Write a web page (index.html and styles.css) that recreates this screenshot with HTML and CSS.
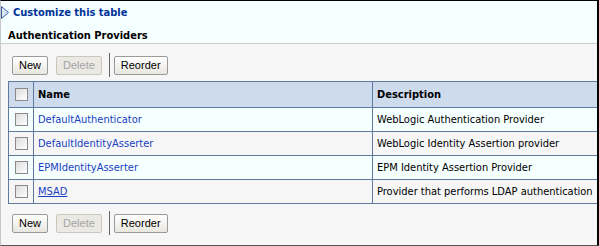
FILE: index.html
```html
<!DOCTYPE html>
<html>
  <head>
    <meta http-equiv="Content-Type" content="text/html; charset=UTF-8" />
    <title>Authentication Providers</title>
    <link rel="stylesheet" href="styles.css">
  </head>
  <body>
    <div class="frame">
      <div class="top">
        <a class="customize" href="#">
          <svg class="arrow" width="8" height="13" viewBox="0 0 8 13">
            <path d="M0.5 0.5 L7.5 6.5 L0.5 12.5 Z" fill="#dbe6f5" stroke="#3a5e9c" stroke-width="1" />
          </svg>
          Customize this table
        </a>
        <h2>Authentication Providers</h2>
      </div>
      <div class="content">
        <div class="toolbar">
          <button class="btn">New</button>
          <button class="btn" disabled>Delete</button>
          <span class="sep"></span>
          <button class="btn">Reorder</button>
        </div>
        <table class="providers">
          <tr>
            <th class="chk"><span class="box"></span></th>
            <th class="name">Name</th>
            <th>Description</th>
          </tr>
          <tr class="odd">
            <td class="chk"><span class="box"></span></td>
            <td><a href="#">DefaultAuthenticator</a></td>
            <td>WebLogic Authentication Provider</td>
          </tr>
          <tr class="even">
            <td class="chk"><span class="box"></span></td>
            <td><a href="#">DefaultIdentityAsserter</a></td>
            <td>WebLogic Identity Assertion provider</td>
          </tr>
          <tr class="odd">
            <td class="chk"><span class="box"></span></td>
            <td><a href="#">EPMIdentityAsserter</a></td>
            <td>EPM Identity Assertion Provider</td>
          </tr>
          <tr class="even">
            <td class="chk"><span class="box"></span></td>
            <td><a class="under" href="#">MSAD</a></td>
            <td>Provider that performs LDAP authentication</td>
          </tr>
        </table>
        <div class="toolbar bottom">
          <button class="btn">New</button>
          <button class="btn" disabled>Delete</button>
          <span class="sep"></span>
          <button class="btn">Reorder</button>
        </div>
      </div>
    </div>
  </body>
</html>
```

FILE: styles.css
```css
body {
  margin: 0;
  padding: 0;
  font-family: "DejaVu Sans Condensed", "DejaVu Sans", sans-serif;
  font-size: 11px;
}
.frame {
  width: 599px;
  height: 246px;
  box-sizing: border-box;
  border-top: 1px solid #000000;
  border-right: 2px solid #000000;
  border-bottom: 1px solid #555555;
  border-left: 1px solid #c8c8c8;
  background-color: #f6f6f6;
  overflow: hidden;
}
.top {
  background-color: #f5ffff;
  height: 42px;
  border-bottom: 1px solid #cccccc;
}
.customize {
  display: flex;
  align-items: center;
  gap: 4px;
  padding-top: 5px;
  color: #003399;
  font-weight: bold;
  font-size: 11px;
  text-decoration: none;
}
.arrow {
  display: block;
}
.top h2 {
  margin: 10px 0 0 7px;
  font-size: 11px;
  color: #000000;
}
.content {
  padding-left: 7px;
}
.toolbar {
  display: flex;
  align-items: center;
  height: 24px;
  margin-top: 9px;
  padding-left: 4px;
}
.toolbar.bottom {
  margin-top: 7px;
}
.btn {
  font-family: "Liberation Sans", Arial, sans-serif;
  font-size: 11px;
  height: 19px;
  padding: 0 6px;
  margin-right: 8px;
  color: #000000;
  background: linear-gradient(#ffffff, #e8e6df);
  border: 1px solid #9a9a9a;
  border-radius: 2px;
}
.btn:disabled {
  color: #a4a4a4;
  background: #ebe9e3;
  border-color: #cac7bf;
  margin-right: 7px;
}
.sep {
  width: 1px;
  height: 24px;
  background-color: #666666;
  margin-right: 4px;
}
.providers {
  border-collapse: collapse;
  width: 591px;
  margin-top: 4px;
}
.providers th,
.providers td {
  border: 1px solid #5f7a9e;
  text-align: left;
  padding: 0 4px;
  height: 23px;
}
.providers th {
  background-color: #cddbec;
  font-weight: bold;
  height: 25px;
}
.providers th.chk,
.providers td.chk {
  width: 16px;
  text-align: center;
}
.providers th.name {
  width: 330px;
}
.odd {
  background-color: #f5ffff;
}
.even {
  background-color: #f6f6f6;
}
.box {
  display: inline-block;
  width: 11px;
  height: 11px;
  vertical-align: middle;
  border: 1px solid #8a8a8a;
  background: linear-gradient(135deg, #dcdcdc, #ffffff);
}
.providers a {
  color: #1a3ec1;
  text-decoration: none;
}
.providers a.under {
  text-decoration: underline;
}
```
